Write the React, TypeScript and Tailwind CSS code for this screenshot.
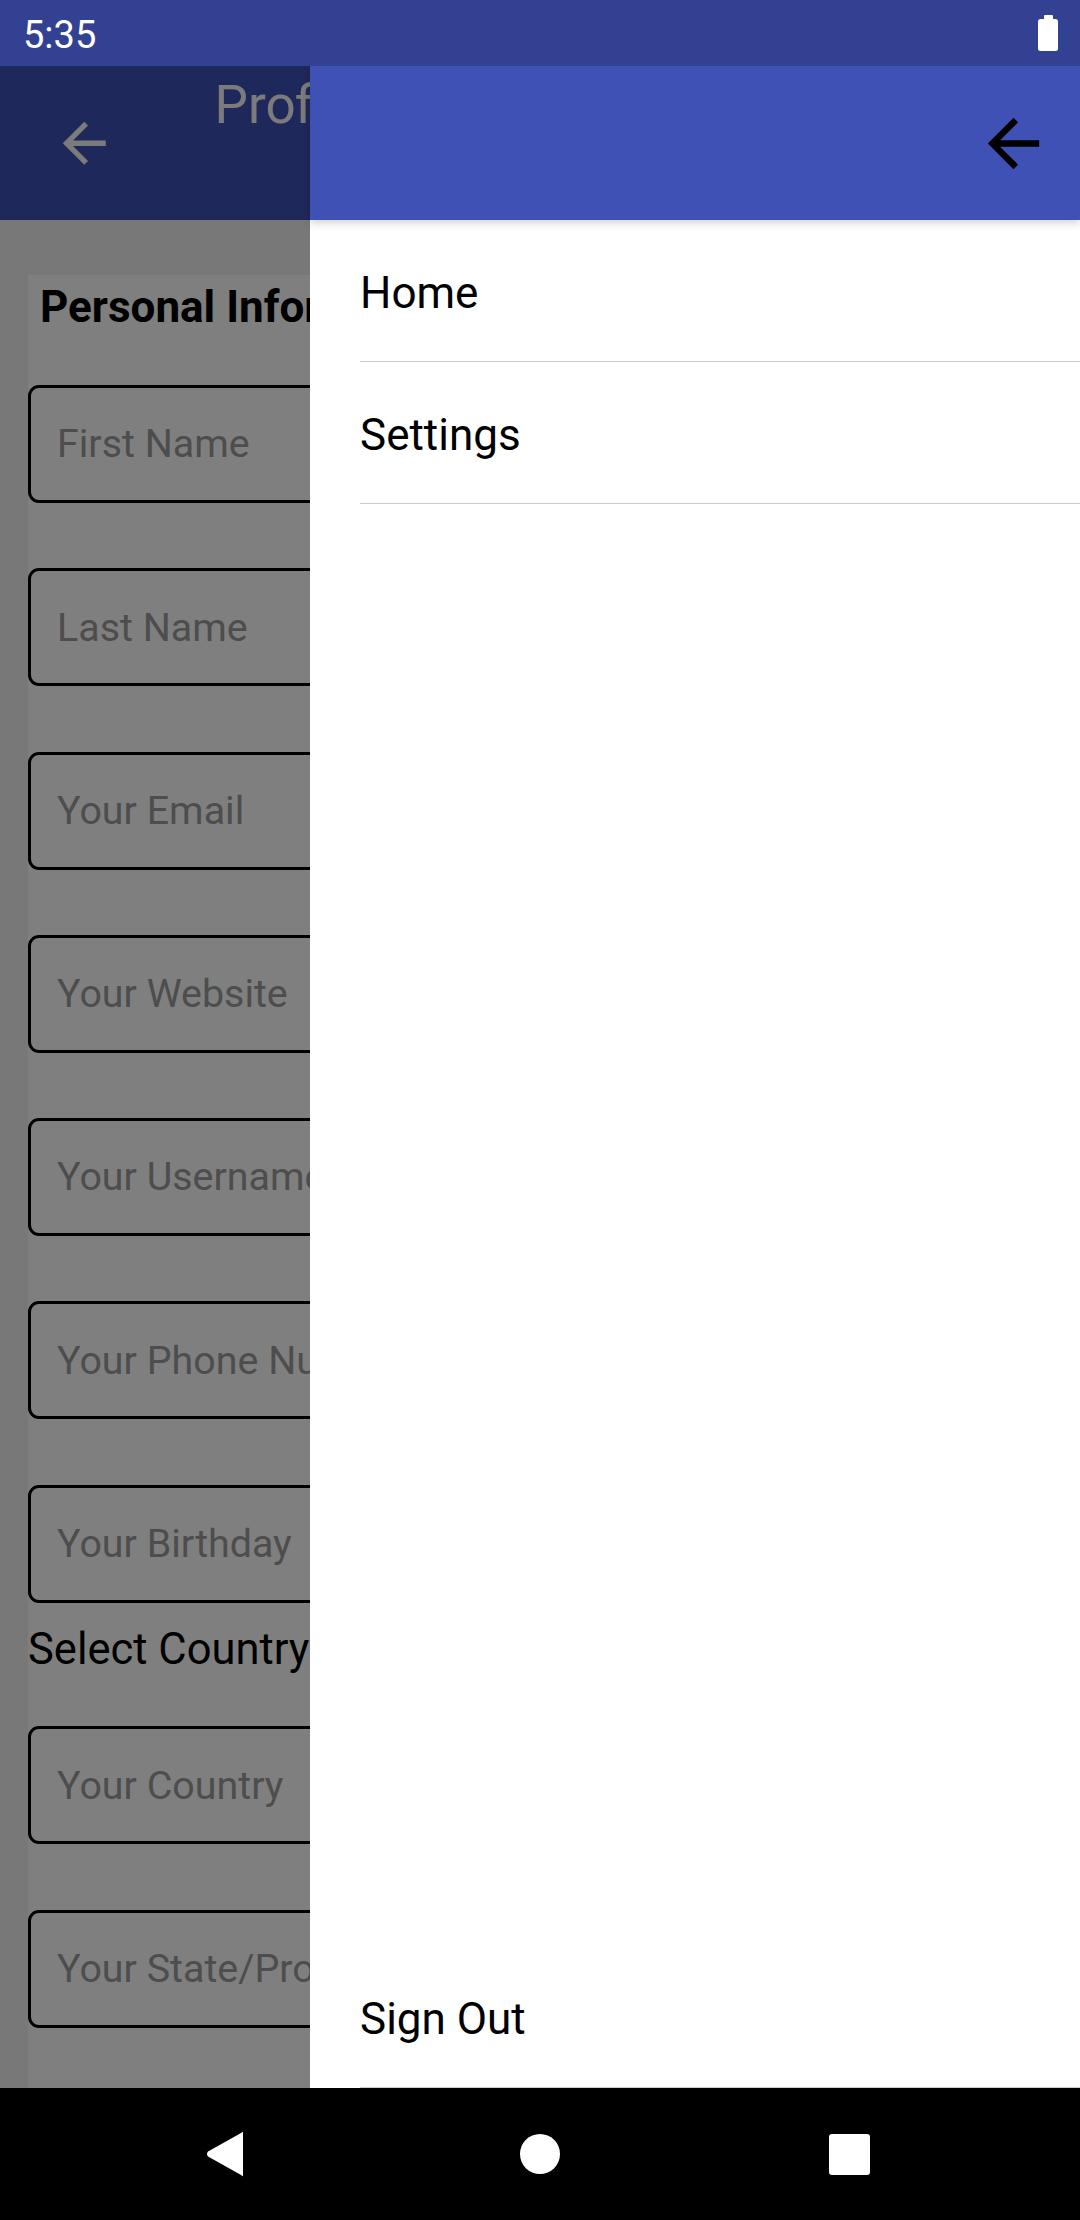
import React from "react";

function ArrowBack({ size, color }: { size: number; color: string }) {
  return (
    <svg width={size} height={size} viewBox="0 0 24 24" fill={color}>
      <path d="M20 11H7.83l5.59-5.59L12 4l-8 8 8 8 1.41-1.41L7.83 13H20v-2z" />
    </svg>
  );
}

const fields = [
  "First Name",
  "Last Name",
  "Your Email",
  "Your Website",
  "Your Username",
  "Your Phone Number",
  "Your Birthday",
];

function Field({ label, first }: { label: string; first?: boolean }) {
  return (
    <div
      className={`${first ? "mt-[56px]" : "mt-[65.3px]"} h-[118px] w-full shrink-0 rounded-[11px] border-[3px] border-black flex items-center pl-[26px]`}
    >
      <span className="text-[39.4px] leading-none text-[#9b9b9b] whitespace-nowrap">{label}</span>
    </div>
  );
}

function MenuItem({ label, className = "" }: { label: string; className?: string }) {
  return (
    <div className={`ml-[50px] h-[142px] shrink-0 border-b border-[#cccccc] flex items-center pt-[5px] ${className}`}>
      <span className="text-[44px] leading-none text-black">{label}</span>
    </div>
  );
}

export default function App() {
  return (
    <div className="w-[1080px] h-[2220px] flex flex-col overflow-hidden font-['Roboto','Noto_Sans',sans-serif] bg-black">
      {/* Status bar */}
      <div className="h-[66px] shrink-0 bg-[#334192] flex items-start justify-between">
        <span className="ml-[23px] mt-[16px] text-[38px] leading-none text-white">5:35</span>
        <svg className="mt-[15px] mr-[22px]" width="20" height="36" viewBox="0 0 20 36">
          <rect x="6" y="0" width="9" height="5" rx="1" fill="white" />
          <rect x="0" y="4" width="20" height="32" rx="2.5" fill="white" />
        </svg>
      </div>

      {/* Main area */}
      <div className="relative flex-1 overflow-hidden bg-[#f0f0f0]">
        {/* Underlying profile page */}
        <div className="flex flex-col h-full">
          <div className="h-[154px] shrink-0 bg-[#3F51B5] flex items-start">
            <div className="ml-[52px] mt-[45px]">
              <ArrowBack size={64.5} color="#f6f6f6" />
            </div>
            <span className="ml-[98px] mt-[13px] text-[53px] leading-none text-[#f6f6f6]">Profile</span>
          </div>
          <div className="flex-1 pt-[55px] px-[28px] overflow-hidden">
            <div className="bg-white h-full flex flex-col pt-[10px]">
              <h2 className="pl-[12px] text-[44px] leading-none font-bold text-black whitespace-nowrap">
                Personal Information
              </h2>
              {fields.map((f, i) => (
                <Field key={f} label={f} first={i === 0} />
              ))}
              <div className="mt-[25px] text-[43.5px] leading-none text-black whitespace-nowrap">Select Country</div>
              <div className="mt-[55px] h-[118px] w-full shrink-0 rounded-[11px] border-[3px] border-black flex items-center pl-[26px]">
                <span className="text-[39.4px] leading-none text-[#9b9b9b] whitespace-nowrap">Your Country</span>
              </div>
              <Field label="Your State/Province" />
            </div>
          </div>
        </div>

        {/* Scrim */}
        <div className="absolute inset-0 bg-black/50" />

        {/* Drawer */}
        <div className="absolute top-0 bottom-0 left-[310px] right-0 bg-white flex flex-col">
          <div className="relative z-10 h-[154px] shrink-0 bg-[#3F51B5] shadow-[0_3px_8px_rgba(0,0,0,0.18)] flex items-center justify-end pr-[28px]">
            <ArrowBack size={77} color="#000000" />
          </div>
          <MenuItem label="Home" />
          <MenuItem label="Settings" />
          <MenuItem label="Sign Out" className="mt-auto" />
        </div>
      </div>

      {/* Navigation bar */}
      <div className="h-[132px] shrink-0 bg-black flex items-center">
        <div className="ml-[186px] w-[80px] flex justify-center">
          <svg width="40" height="46" viewBox="0 0 40 46">
            <path d="M37 1.5 L37 44.5 Q37 46 35.5 44.3 L2 25.5 Q0 23 2 20.5 L35.5 1.7 Q37 0 37 1.5 Z" fill="white" />
          </svg>
        </div>
        <div className="ml-[234px] w-[80px] flex justify-center">
          <div className="w-[40px] h-[40px] rounded-full bg-white" />
        </div>
        <div className="ml-[229px] w-[80px] flex justify-center">
          <div className="w-[41px] h-[41px] rounded-[3px] bg-white" />
        </div>
      </div>
    </div>
  );
}
